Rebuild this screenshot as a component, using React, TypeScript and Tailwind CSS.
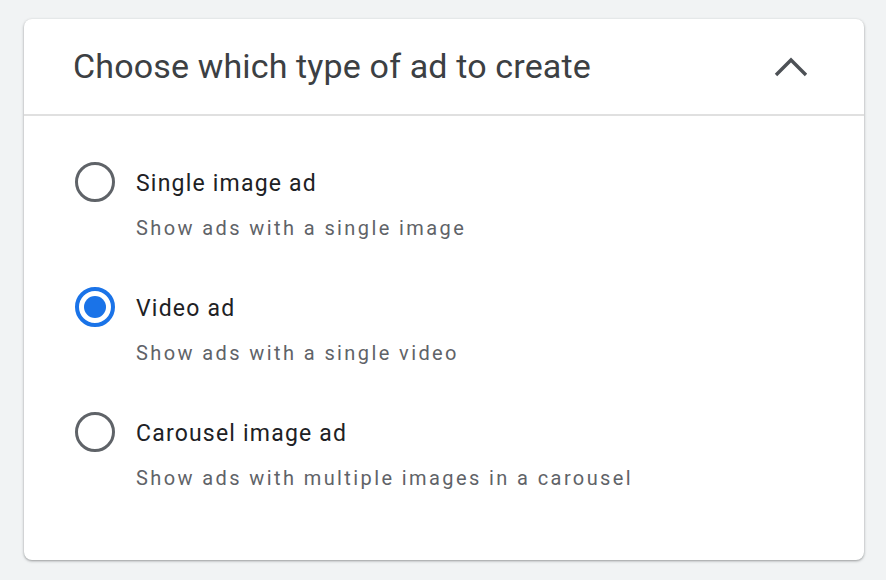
import { useState } from "react";

type AdOption = {
  id: string;
  label: string;
  description: string;
};

const options: AdOption[] = [
  { id: "single", label: "Single image ad", description: "Show ads with a single image" },
  { id: "video", label: "Video ad", description: "Show ads with a single video" },
  { id: "carousel", label: "Carousel image ad", description: "Show ads with multiple images in a carousel" },
];

function Radio({ checked }: { checked: boolean }) {
  if (checked) {
    return (
      <div className="flex h-10 w-10 shrink-0 items-center justify-center rounded-full border-[4px] border-[#1a73e8]">
        <div className="h-[22px] w-[22px] rounded-full bg-[#1a73e8]" />
      </div>
    );
  }
  return <div className="h-10 w-10 shrink-0 rounded-full border-[3px] border-[#5f6368]" />;
}

export default function App() {
  const [selected, setSelected] = useState("video");

  return (
    <div className="h-[580px] w-[886px] bg-[#f1f3f4] pl-6 pt-[19px] font-['Roboto',sans-serif]">
      <div className="h-[541px] w-[840px] rounded-lg bg-white shadow-[0_1px_3px_rgba(60,64,67,0.35),0_1px_2px_rgba(60,64,67,0.2)]">
        <div className="flex h-[97px] items-center justify-between border-b-2 border-[#e0e0e0] pl-[49px] pr-[56px]">
          <h1 className="text-[34px] tracking-[0.15px] text-[#3c4043]">Choose which type of ad to create</h1>
          <svg width="34" height="20" viewBox="0 0 34 20" fill="none">
            <path d="M2 18 L17 3 L32 18" stroke="#4d5156" strokeWidth="3.4" />
          </svg>
        </div>
        <div className="flex flex-col gap-[45px] pl-[51px] pt-[46px]">
          {options.map((opt) => (
            <div key={opt.id} className="flex cursor-pointer flex-col" onClick={() => setSelected(opt.id)}>
              <div className="flex h-10 items-center gap-[21px]">
                <Radio checked={selected === opt.id} />
                <span className="mt-[4px] text-[23px] tracking-[1.2px] text-[#202124]">{opt.label}</span>
              </div>
              <p className="mt-[12px] pl-[61px] text-[20px] leading-[28px] tracking-[2.4px] text-[#5f6368]">
                {opt.description}
              </p>
            </div>
          ))}
        </div>
      </div>
    </div>
  );
}
